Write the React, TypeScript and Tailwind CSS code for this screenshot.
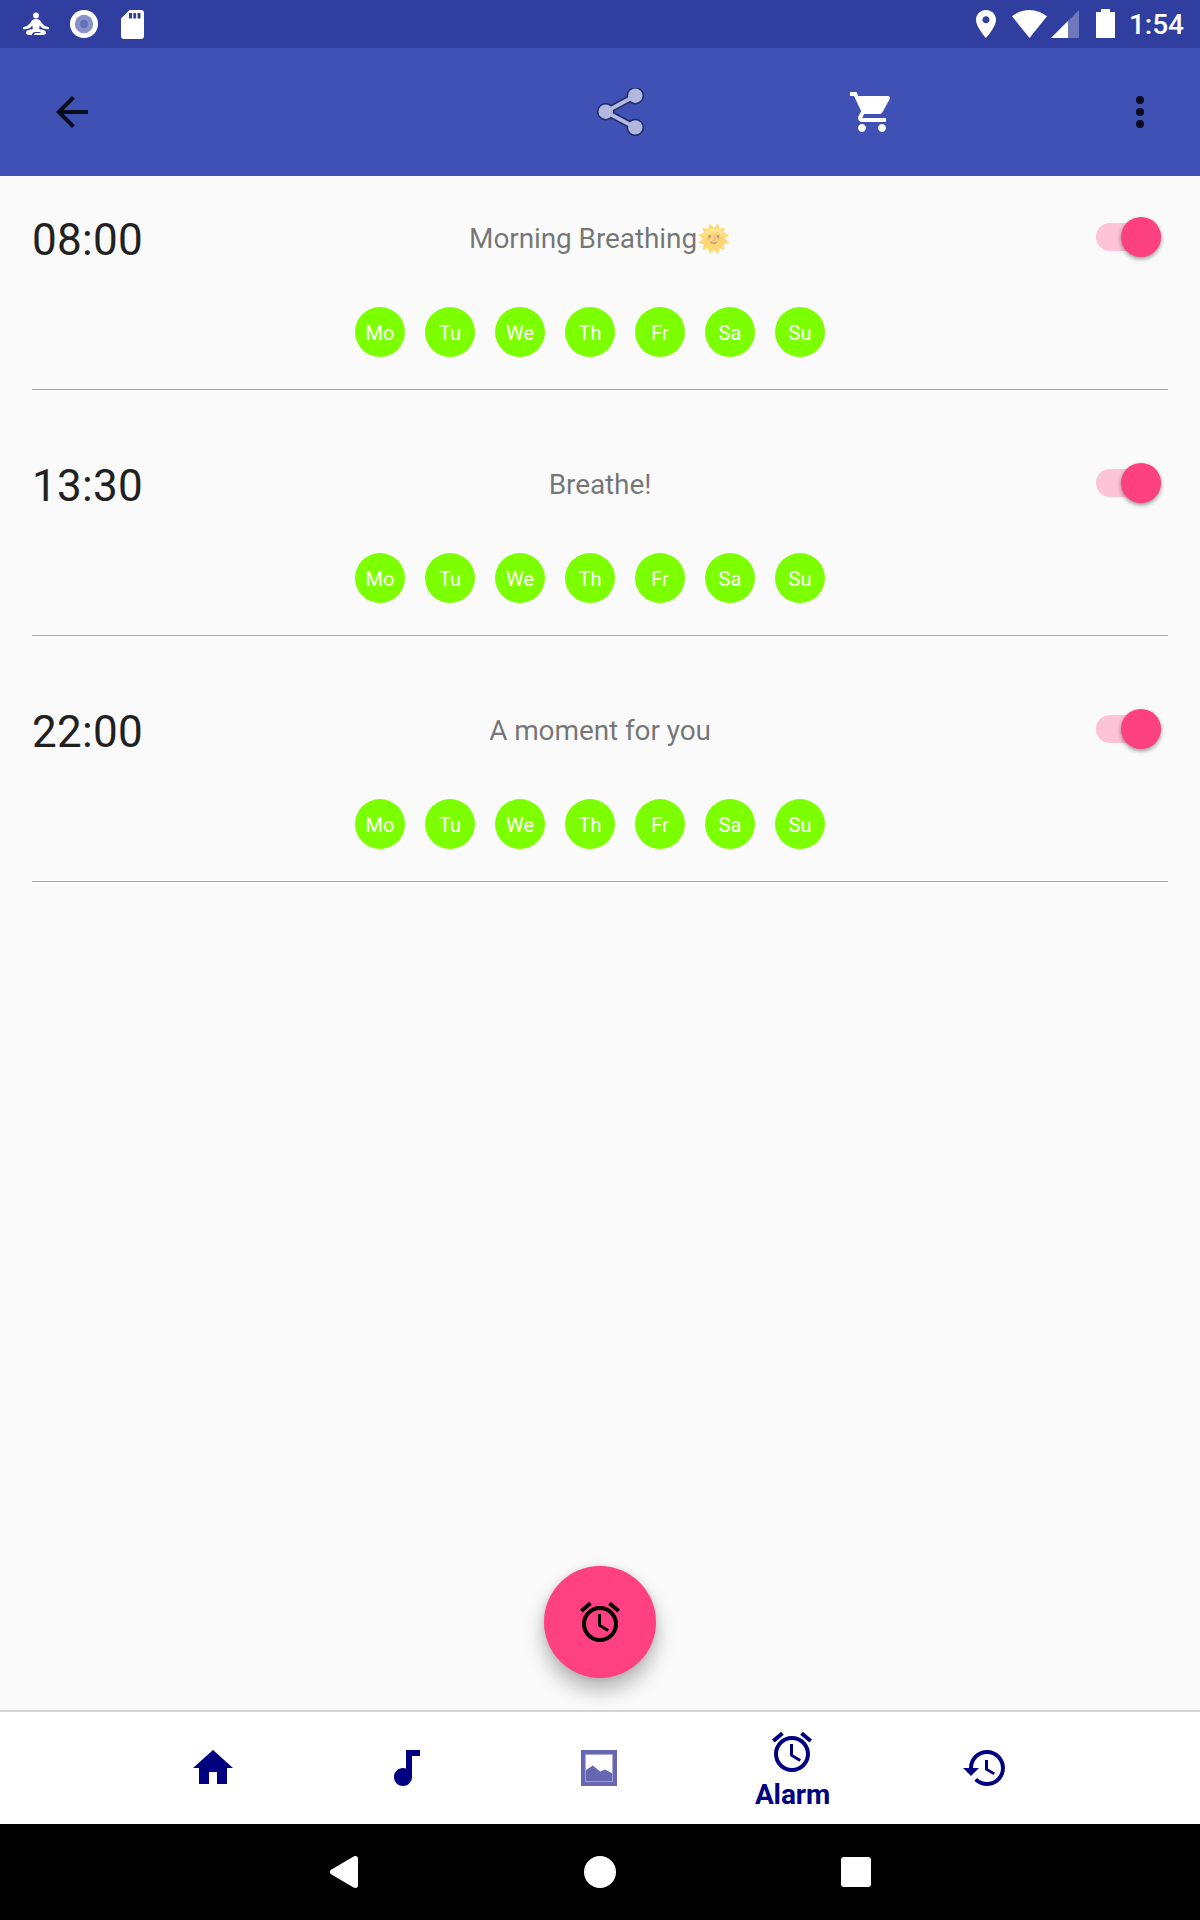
import type { ReactNode } from "react";

const DAYS = ["Mo", "Tu", "We", "Th", "Fr", "Sa", "Su"];

const ALARMS = [
  { time: "08:00", label: "Morning Breathing", emoji: "🌞" },
  { time: "13:30", label: "Breathe!" },
  { time: "22:00", label: "A moment for you" },
];

function Icon({ children, className = "" }: { children: ReactNode; className?: string }) {
  return (
    <svg className={`h-12 w-12 shrink-0 ${className}`} viewBox="0 0 24 24" fill="currentColor">
      {children}
    </svg>
  );
}

function AlarmIcon({ className = "" }: { className?: string }) {
  return (
    <Icon className={className}>
      <path d="M22 5.72l-4.6-3.86-1.29 1.53 4.6 3.86L22 5.72zM7.88 3.39L6.6 1.86 2 5.71l1.29 1.53 4.59-3.85zM12.5 8H11v6l4.75 2.85.75-1.23-4-2.37V8zM12 4c-4.97 0-9 4.03-9 9s4.02 9 9 9c4.97 0 9-4.03 9-9s-4.03-9-9-9zm0 16c-3.87 0-7-3.13-7-7s3.13-7 7-7 7 3.13 7 7-3.13 7-7 7z" />
    </Icon>
  );
}

function StatusBar() {
  return (
    <div className="flex h-12 shrink-0 items-center bg-[#303f9f] pl-[23px] pr-4 text-white">
      {/* Meditation */}
      <svg className="h-6 w-[26px]" viewBox="0 0 26 24" fill="currentColor">
        <circle cx="13" cy="3.5" r="2.9" />
        <path d="M13 7c2.2 0 3.600.8 4.800 2.400 2 2.800 3.600 5.100 8.200 5.600v2.300c-4.400.2-7-1-9.400-3.800L16.200 18H9.800l-.4-4.500C7 16.300 4.400 17.500 0 17.300V15c4.600-.5 6.200-2.800 8.200-5.600C9.400 7.800 10.800 7 13 7z" />
        <path d="M9.800 17.200h6.400c4 .3 6.800 1.200 6.800 3.400 0 1.600-1.200 2.400-3 2.400h-9.300c.2-1.500 1.300-2.100 3.100-2.100h3.600v-.9h-5c-2 0-3.300 1-3.600 3H6c-1.800 0-3-.8-3-2.400 0-2.200 2.800-3.100 6.800-3.400z" />
      </svg>
      {/* Record */}
      <svg className="ml-[21px] h-7 w-7" viewBox="0 0 28 28" fill="none">
        <circle cx="14" cy="14" r="14" fill="#fff" />
        <circle cx="14" cy="14" r="9.200" fill="#8791ca" />
        <circle cx="14" cy="14" r="4.200" fill="#6570b7" />
      </svg>
      {/* SD card */}
      <svg className="ml-[23px] h-[29px] w-[23px]" viewBox="0 0 23 29" fill="currentColor">
        <path fillRule="evenodd" d="M8.500 0H20a3 3 0 0 1 3 3v23a3 3 0 0 1-3 3H3a3 3 0 0 1-3-3V8.500zM8 3v5.500h3V3zM12.300 3v5.500h2.800V3zM16.500 3v5.500h3V3z" />
      </svg>

      <div className="ml-auto flex items-center">
        <svg className="h-7 w-5" viewBox="5 2 14 20" preserveAspectRatio="none" fill="currentColor">
          <path d="M12 2C8.130 2 5 5.130 5 9c0 5.250 7 13 7 13s7-7.750 7-13c0-3.870-3.130-7-7-7zm0 9.500c-1.380 0-2.500-1.120-2.500-2.500s1.120-2.500 2.500-2.500 2.500 1.120 2.500 2.500-1.120 2.500-2.500 2.500z" />
        </svg>
        <svg className="ml-4 h-7 w-[35px]" viewBox="0 0 35 28" fill="currentColor">
          <path d="M0 6.300C5 2.300 11 0 17.500 0S30 2.300 35 6.300L17.500 28z" />
        </svg>
        <svg className="ml-1 h-7 w-7" viewBox="0 0 28 28" fill="currentColor">
          <path opacity=".3" d="M0 28L28 0v28z" />
          <path d="M0 28L17 11v17z" />
        </svg>
        <svg className="ml-[17px] mb-px h-[29px] w-[19px]" viewBox="0 0 19 29" fill="currentColor">
          <path d="M5 0h9v3h5v26H0V3h5z" />
        </svg>
        <span className="ml-[14px] mt-[2px] text-[28px] font-medium leading-8">1:54</span>
      </div>
    </div>
  );
}

function AppBar() {
  return (
    <header className="flex h-32 shrink-0 items-center bg-[#3f51b5] pl-12 pr-9">
      <Icon className="text-[#090c1b]">
        <path d="M20 11H7.830l5.590-5.590L12 4l-8 8 8 8 1.410-1.410L7.830 13H20v-2z" />
      </Icon>
      <svg className="ml-[500px] h-12 w-12 shrink-0" viewBox="0 0 48 48">
        <g stroke="#1f2a66" fill="#1f2a66">
          <path d="M39.300 7.700L9.700 23.700l29.600 15.800" fill="none" strokeWidth="7" />
          <circle cx="39.300" cy="7.700" r="8.300" />
          <circle cx="9.700" cy="23.700" r="8.300" />
          <circle cx="39.300" cy="39.400" r="8.300" />
        </g>
        <g fill="#b2b9e1">
          <path d="M39.300 7.700L9.700 23.700l29.600 15.800" fill="none" stroke="#b2b9e1" strokeWidth="4" />
          <circle cx="39.300" cy="7.700" r="7.200" />
          <circle cx="9.700" cy="23.700" r="7.200" />
          <circle cx="39.300" cy="39.400" r="7.200" />
        </g>
      </svg>
      <Icon className="ml-[204px] text-white">
        <path d="M7 18c-1.100 0-1.990.9-1.990 2S5.900 22 7 22s2-.9 2-2-.9-2-2-2zM1 2v2h2l3.600 7.590-1.350 2.450c-.16.280-.25.610-.25.960 0 1.100.9 2 2 2h12v-2H7.420c-.14 0-.25-.11-.25-.25l.03-.12.9-1.630h7.450c.75 0 1.410-.41 1.750-1.030l3.580-6.490c.08-.14.12-.31.12-.48 0-.55-.45-1-1-1H5.210l-.94-2H1zm16 16c-1.100 0-1.990.9-1.990 2s.89 2 1.990 2 2-.9 2-2-.9-2-2-2z" />
      </Icon>
      <Icon className="ml-auto text-[#090c1b]">
        <circle cx="12" cy="6" r="2" />
        <circle cx="12" cy="12" r="2" />
        <circle cx="12" cy="18" r="2" />
      </Icon>
    </header>
  );
}

function Switch() {
  return (
    <div className="mb-[2px] mr-[7px] flex h-7 w-[65px] items-center justify-end rounded-full bg-[#fdc3d7]">
      <div className="h-10 w-10 shrink-0 rounded-full bg-[#fc4080] shadow-[0_2px_4px_rgba(0,0,0,0.4)]" />
    </div>
  );
}

function AlarmRow({ time, label, emoji }: { time: string; label: string; emoji?: string }) {
  return (
    <div className="mx-8 flex h-[246px] flex-col border-b border-[#a8a8a8]">
      <div className="mt-[66px] grid h-14 grid-cols-[1fr_auto_1fr] items-center">
        <span className="mt-1 text-[44px] leading-[52px] tracking-[0.3px] text-[#212121]">{time}</span>
        <span className="mt-[2px] text-[28px] leading-8 tracking-[-0.1px] text-black/54">
          {label}
          {emoji && <span className="text-[27px] leading-none">{emoji}</span>}
        </span>
        <div className="flex justify-end">
          <Switch />
        </div>
      </div>
      <div className="ml-[323px] mt-[41px] flex gap-5">
        {DAYS.map((day) => (
          <span
            key={day}
            className="flex h-[50px] w-[50px] items-center justify-center rounded-full bg-[#7cff00] pt-[2px] text-[20px] leading-6 text-white"
          >
            {day}
          </span>
        ))}
      </div>
    </div>
  );
}

function NavItem({ children }: { children: ReactNode }) {
  return <div className="flex w-[193px] flex-col items-center justify-center">{children}</div>;
}

function BottomNav() {
  return (
    <nav className="flex h-[114px] shrink-0 justify-center border-t-2 border-[#d4d4d4] bg-white pr-[2px] text-[#000080]">
      <NavItem>
        <Icon>
          <path d="M10 20v-6h4v6h5v-8h3L12 3 2 12h3v8z" />
        </Icon>
      </NavItem>
      <NavItem>
        <Icon>
          <path d="M12 3v9.280c-.47-.17-.97-.28-1.500-.28C8.010 12 6 14.010 6 16.500S8.010 21 10.500 21c2.310 0 4.200-1.750 4.450-4H15V6h4V3h-7z" />
        </Icon>
      </NavItem>
      <NavItem>
        <Icon className="text-[#6666b3]">
          <path fillRule="evenodd" d="M3 3h18v18H3zM5.200 5.200v13.600h13.600V5.200z" />
          <path d="M5.200 13.200L8.900 10.800l3.700 3 2.400-1 3.800 2v4h-13.600z" />
          <path d="M5.200 5.200h13.600v13.600H5.200z" fill="none" stroke="#a3a3d1" strokeWidth=".4" />
        </Icon>
      </NavItem>
      <NavItem>
        <AlarmIcon className="mt-[2px]" />
        <span className="mt-[3px] pl-px text-[28px] font-bold leading-8 tracking-[-0.1px]">Alarm</span>
      </NavItem>
      <NavItem>
        <Icon>
          <path d="M13 3c-4.970 0-9 4.030-9 9H1l3.890 3.890.07.140L9 12H6c0-3.870 3.130-7 7-7s7 3.130 7 7-3.130 7-7 7c-1.930 0-3.680-.79-4.940-2.060l-1.420 1.420C8.270 19.990 10.510 21 13 21c4.970 0 9-4.030 9-9s-4.030-9-9-9zm-1 5v5l4.280 2.540.72-1.210-3.500-2.080V8H12z" />
        </Icon>
      </NavItem>
    </nav>
  );
}

function SystemNav() {
  return (
    <div className="flex h-24 shrink-0 items-center bg-black pl-[330px] text-white">
      <svg className="h-8 w-7" viewBox="0 0 28 32" fill="currentColor">
        <path d="M1.500 13.600L23.600.5C25.800-.6 28 .2 28 2.500v27c0 2.300-2.200 3.100-4.400 2L1.500 18.400c-2-1.200-2-3.600 0-4.800z" />
      </svg>
      <div className="ml-[226px] h-8 w-8 rounded-full bg-white" />
      <div className="ml-[225px] h-[30px] w-[30px] rounded-[3px] bg-white" />
    </div>
  );
}

export default function App() {
  return (
    <div className="flex h-[1920px] w-[1200px] flex-col overflow-hidden bg-[#fafafa] font-[Roboto,sans-serif]">
      <StatusBar />
      <AppBar />
      <main className="relative flex-1">
        <div className="-mt-8">
          {ALARMS.map((alarm) => (
            <AlarmRow key={alarm.time} {...alarm} />
          ))}
        </div>
        {/* Add alarm */}
        <button className="absolute bottom-8 left-1/2 flex h-28 w-28 -translate-x-1/2 items-center justify-center rounded-full bg-[#ff4081] text-black shadow-[0_12px_20px_rgba(0,0,0,0.28),0_0_6px_rgba(0,0,0,0.1)]">
          <AlarmIcon />
        </button>
      </main>
      <BottomNav />
      <SystemNav />
    </div>
  );
}
